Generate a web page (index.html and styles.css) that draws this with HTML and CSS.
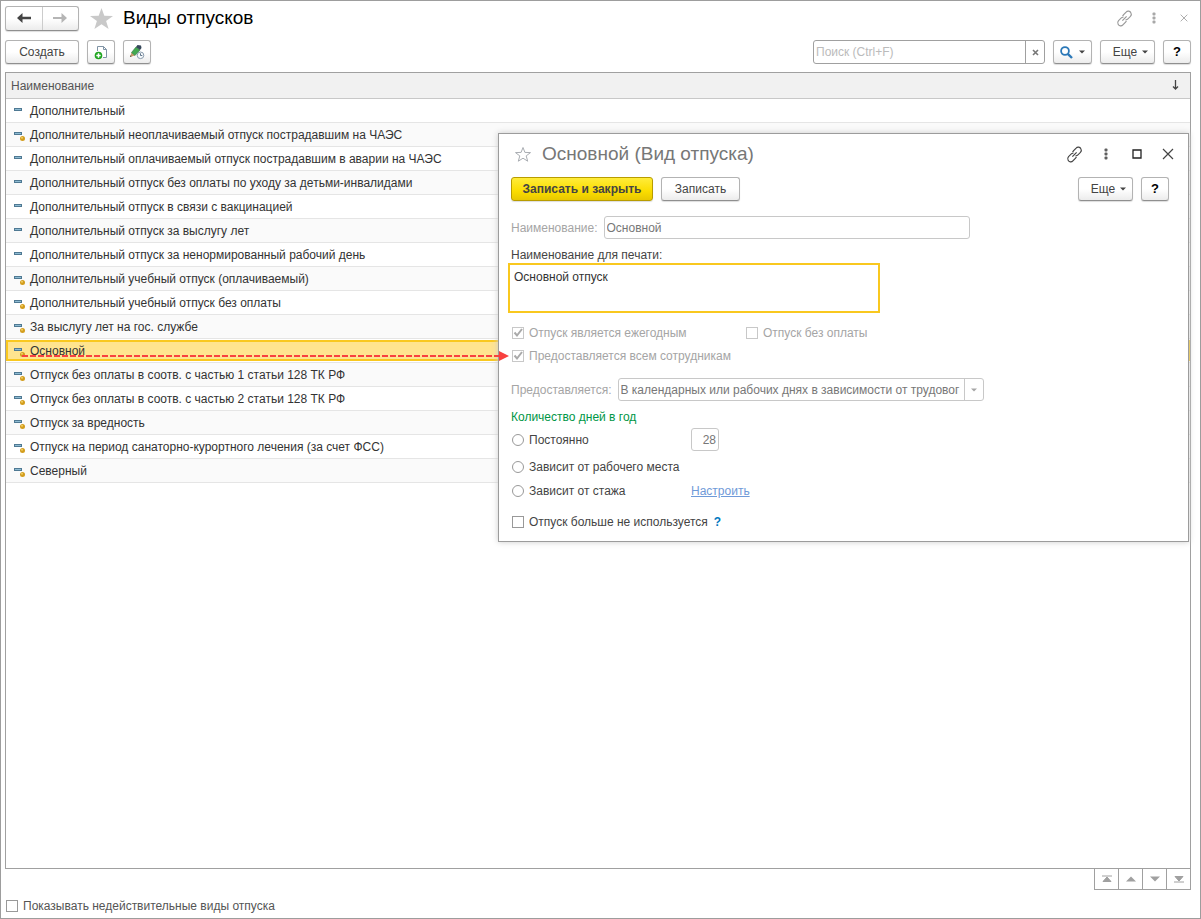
FILE: index.html
```html
<!DOCTYPE html>
<html lang="ru">
<head>
<meta charset="utf-8">
<title>Виды отпусков</title>
<link rel="stylesheet" href="styles.css">
</head>
<body>
<svg class="sprite" aria-hidden="true">
  <symbol id="link" viewBox="0 0 16 16"><g fill="none" stroke="currentColor" stroke-width="1.1"><path d="M6.200 5.800 7 4.600 9.500 2A2.700 2.700 0 0 1 14 2.600 2.900 2.900 0 0 1 13.600 6L10.800 8.800 9 9.400"/><path d="M9.800 10.200 9 11.400 6.500 14A2.700 2.700 0 0 1 2 13.400 2.900 2.900 0 0 1 2.400 10L5.200 7.200 7 6.600"/><path d="M6 10 10 6"/></g></symbol>
  <symbol id="dots" viewBox="0 0 4 12"><g fill="currentColor" opacity=".85"><rect x="0.5" y="0.5" width="3" height="3" rx="1"/><rect x="0.5" y="4.5" width="3" height="3" rx="1"/><rect x="0.5" y="8.5" width="3" height="3" rx="1"/></g></symbol>
  <symbol id="cross" viewBox="0 0 12 12"><path d="M1 1 11 11M11 1 1 11" fill="none" stroke="currentColor" stroke-width="1.2"/></symbol>
  <symbol id="caret" viewBox="0 0 6 4"><path d="M0 0.5H6L3 3.5Z" fill="currentColor"/></symbol>
  <symbol id="item" viewBox="0 0 12 12"><rect x="0" y="2" width="8" height="3" fill="#4f7993"/><rect x="1" y="3" width="6" height="1" fill="#8fbcd3"/></symbol>
  <symbol id="item-dot" viewBox="0 0 12 12"><rect x="0" y="2" width="8" height="3" fill="#4f7993"/><rect x="1" y="3" width="6" height="1" fill="#8fbcd3"/><circle cx="8.5" cy="8.500" r="2.500" fill="#d39d1c"/><circle cx="8" cy="7.800" r="1" fill="#f0cf68"/></symbol>
</svg>
<main class="window">
  <header class="titlebar">
    <div class="nav">
      <button type="button" aria-label="Назад"><svg width="14" height="10" viewBox="0 0 14 10"><path d="M5.500 0 0 5l5.500 5V6.200H14V3.800H5.500Z" fill="#444"/></svg></button>
      <button type="button" aria-label="Вперед"><svg width="14" height="10" viewBox="0 0 14 10"><path d="M8.500 0 14 5l-5.500 5V6H0V4H8.500Z" fill="#b5b5b5"/></svg></button>
    </div>
    <svg class="star" width="23" height="21" viewBox="0 0 23 21"><path d="M11.500 0 14.300 7.700 23 8 16.100 13 18.600 21 11.500 16.300 4.400 21 6.900 13 0 8 8.700 7.700Z" fill="#c9c9c9"/></svg>
    <h1>Виды отпусков</h1>
    <div class="tools">
      <button type="button" class="icon" aria-label="Ссылка"><svg width="17" height="17"><use href="#link"/></svg></button>
      <button type="button" class="icon" aria-label="Меню"><svg width="4" height="12"><use href="#dots"/></svg></button>
      <button type="button" class="icon" aria-label="Закрыть"><svg width="8" height="8"><use href="#cross"/></svg></button>
    </div>
  </header>

  <div class="toolbar">
    <button type="button" class="btn create">Создать</button>
    <button type="button" class="btn square" aria-label="Скопировать"><svg width="16" height="16" viewBox="0 0 16 16"><path d="M4.500 7V2.500H10.500L13.500 5.500V13.500H10M10.500 2.500V5.500H13.500" fill="#fff" stroke="#7f93a5"/><circle cx="5.500" cy="11.500" r="3.800" fill="#1fa51f"/><path d="M5.500 9.300V13.700M3.300 11.500H7.700" stroke="#fff" stroke-width="1.500"/></svg></button>
    <button type="button" class="btn square" aria-label="Изменить"><svg width="16" height="16" viewBox="0 0 16 16"><path d="M1 13 2.500 8.500 6 11.500Z" fill="#c99b6a"/><path d="M2.500 8.500 7 3 11 6 6 11.500Z" fill="#43a951" stroke="#2d7540" stroke-width=".6"/><path d="M7 3 8.500 1 12 1.500 12.500 4 11 6Z" fill="#35475a"/><path d="m1 13 .6-1.800 1 1Z" fill="#333"/><circle cx="11.500" cy="11.300" r="3.300" fill="#f7fafc" stroke="#899bac"/><path d="M11.500 9.300V11.500H13.300" fill="none" stroke="#60758a"/></svg></button>
    <div class="search">
      <input type="search" placeholder="Поиск (Ctrl+F)" aria-label="Поиск">
      <button type="button" aria-label="Очистить"><svg width="7" height="7" viewBox="0 0 7 7"><path d="M1 1 6 6M6 1 1 6" stroke="#777" stroke-width="1.600"/></svg></button>
    </div>
    <button type="button" class="btn find" aria-label="Найти"><svg width="13" height="13" viewBox="0 0 13 13"><circle cx="5" cy="5" r="3.900" fill="none" stroke="#2b78b8" stroke-width="1.800"/><path d="M7.800 7.800 12 12" stroke="#2b78b8" stroke-width="2.400"/></svg><svg width="6" height="4"><use href="#caret"/></svg></button>
    <button type="button" class="btn more">Еще<svg width="6" height="4"><use href="#caret"/></svg></button>
    <button type="button" class="btn square help">?</button>
  </div>

  <section class="list">
    <table>
      <thead><tr><th scope="col"><div class="head">Наименование<svg width="7" height="10" viewBox="0 0 7 10"><path d="M3.500 0V9M1 6.500 3.500 9 6 6.500" fill="none" stroke="#444" stroke-width="1.300"/></svg></div></th></tr></thead>
      <tbody>
        <tr><td><svg><use href="#item"/></svg>Дополнительный</td></tr>
        <tr><td><svg><use href="#item-dot"/></svg>Дополнительный неоплачиваемый отпуск пострадавшим на ЧАЭС</td></tr>
        <tr><td><svg><use href="#item"/></svg>Дополнительный оплачиваемый отпуск пострадавшим в аварии на ЧАЭС</td></tr>
        <tr><td><svg><use href="#item"/></svg>Дополнительный отпуск без оплаты по уходу за детьми-инвалидами</td></tr>
        <tr><td><svg><use href="#item"/></svg>Дополнительный отпуск в связи с вакцинацией</td></tr>
        <tr><td><svg><use href="#item"/></svg>Дополнительный отпуск за выслугу лет</td></tr>
        <tr><td><svg><use href="#item"/></svg>Дополнительный отпуск за ненормированный рабочий день</td></tr>
        <tr><td><svg><use href="#item-dot"/></svg>Дополнительный учебный отпуск (оплачиваемый)</td></tr>
        <tr><td><svg><use href="#item-dot"/></svg>Дополнительный учебный отпуск без оплаты</td></tr>
        <tr><td><svg><use href="#item-dot"/></svg>За выслугу лет на гос. службе</td></tr>
        <tr class="selected"><td><svg><use href="#item-dot"/></svg>Основной</td></tr>
        <tr><td><svg><use href="#item-dot"/></svg>Отпуск без оплаты в соотв. с частью 1 статьи 128 ТК РФ</td></tr>
        <tr><td><svg><use href="#item-dot"/></svg>Отпуск без оплаты в соотв. с частью 2 статьи 128 ТК РФ</td></tr>
        <tr><td><svg><use href="#item-dot"/></svg>Отпуск за вредность</td></tr>
        <tr><td><svg><use href="#item-dot"/></svg>Отпуск на период санаторно-курортного лечения (за счет ФСС)</td></tr>
        <tr><td><svg><use href="#item-dot"/></svg>Северный</td></tr>
      </tbody>
    </table>
  </section>
  <div class="pager">
    <button type="button" aria-label="В начало"><svg width="10" height="8" viewBox="0 0 10 8"><path d="M0 1H10M1 6.500 5 2 9 6.500Z" fill="#a0a0a0" stroke="#a0a0a0"/></svg></button>
    <button type="button" aria-label="Вверх"><svg width="10" height="8" viewBox="0 0 10 8"><path d="M0 6.500 5 1.500 10 6.500Z" fill="#a0a0a0"/></svg></button>
    <button type="button" aria-label="Вниз"><svg width="10" height="8" viewBox="0 0 10 8"><path d="M0 1.500 5 6.500 10 1.500Z" fill="#a0a0a0"/></svg></button>
    <button type="button" aria-label="В конец"><svg width="10" height="8" viewBox="0 0 10 8"><path d="M0 7H10M1 1.500 5 6 9 1.500Z" fill="#a0a0a0" stroke="#a0a0a0"/></svg></button>
  </div>
  <label class="check inactive"><input type="checkbox">Показывать недействительные виды отпуска</label>

  <section class="dialog" role="dialog" aria-labelledby="dialog-title">
    <header class="dialog-title">
      <svg width="18" height="17" viewBox="0 0 18 17"><path d="M9 1.500 10.900 6.400 16.500 6.600 12.200 9.900 13.700 15.200 9 12.200 4.300 15.200 5.800 9.900 1.500 6.600 7.100 6.400Z" fill="none" stroke="#a9adb2"/></svg>
      <h2 id="dialog-title">Основной (Вид отпуска)</h2>
      <div class="tools">
        <button type="button" class="icon" aria-label="Ссылка"><svg width="17" height="17"><use href="#link"/></svg></button>
        <button type="button" class="icon" aria-label="Меню"><svg width="4" height="12"><use href="#dots"/></svg></button>
        <button type="button" class="icon" aria-label="Развернуть"><svg width="10" height="10" viewBox="0 0 10 10"><path d="M1 1H9V9H1Z" fill="none" stroke="#222" stroke-width="1.300"/></svg></button>
        <button type="button" class="icon" aria-label="Закрыть"><svg width="12" height="12"><use href="#cross"/></svg></button>
      </div>
    </header>
    <div class="dialog-bar">
      <button type="button" class="btn primary">Записать и закрыть</button>
      <button type="button" class="btn save">Записать</button>
      <button type="button" class="btn more">Еще<svg width="6" height="4"><use href="#caret"/></svg></button>
      <button type="button" class="btn square help">?</button>
    </div>
    <form class="form">
      <div class="field"><label for="name">Наименование:</label><input id="name" type="text" value="Основной" disabled></div>
      <label class="caption" for="print-name">Наименование для печати:</label>
      <textarea id="print-name">Основной отпуск</textarea>
      <div class="pair">
        <label class="check"><input type="checkbox" checked disabled>Отпуск является ежегодным</label>
        <label class="check"><input type="checkbox" disabled>Отпуск без оплаты</label>
      </div>
      <label class="check everyone"><input type="checkbox" checked disabled>Предоставляется всем сотрудникам</label>
      <div class="field provided"><label for="kind">Предоставляется:</label><div class="combo"><select id="kind" disabled><option>В календарных или рабочих днях в зависимости от трудовог</option></select><span><svg width="6" height="4"><use href="#caret"/></svg></span></div></div>
      <fieldset>
        <legend>Количество дней в год</legend>
        <div class="option tall"><label class="check"><input type="radio" name="days">Постоянно</label><input class="days" type="text" value="28" aria-label="Количество дней" disabled></div>
        <div class="option"><label class="check"><input type="radio" name="days">Зависит от рабочего места</label></div>
        <div class="option"><label class="check"><input type="radio" name="days">Зависит от стажа</label><a href="#">Настроить</a></div>
      </fieldset>
      <div class="unused"><label class="check"><input type="checkbox">Отпуск больше не используется</label><a class="hint" href="#">?</a></div>
    </form>
  </section>
  <svg class="arrow" width="487" height="10" viewBox="0 0 487 10" aria-hidden="true"><path d="M0 5H478" stroke="#f8413f" stroke-width="2" stroke-dasharray="6 2"/><path d="M477 0 487 5 477 10Z" fill="#f8413f"/></svg>
</main>
</body>
</html>
```
FILE: styles.css
```css
* { box-sizing: border-box; }
body { margin: 0; background: #fff; color: #333; font: 12px/16px "Liberation Sans", Arial, sans-serif; }
button, input, select, textarea { font: inherit; color: inherit; margin: 0; }
button { padding: 0; }
svg { flex: none; }
h1, h2 { margin: 0; font-weight: normal; }
a { color: #6f9ad8; }
.sprite { position: absolute; width: 0; height: 0; }

.window { position: relative; display: flex; flex-direction: column; min-height: 100vh; border: 1px solid #9d9d9d; padding: 4px 9px 4px 4px; }
.titlebar { display: flex; align-items: center; height: 26px; }
.nav { display: flex; width: 74px; height: 25px; border: 1px solid #b3b3b3; border-bottom-color: #8f8f8f; border-radius: 3px; background: linear-gradient(#fff 50%, #ececec); box-shadow: 0 1px 1px #ddd; }
.nav button { flex: 1; display: flex; align-items: center; justify-content: center; border: 0; background: none; }
.nav button + button { border-left: 1px solid #ccc; }
.star { margin: 0 10px 0 11px; }
h1 { font-size: 19px; line-height: 24px; color: #000; }
.tools { display: flex; align-items: center; margin-left: auto; }
.icon { display: flex; align-items: center; justify-content: center; border: 0; background: none; width: 30px; height: 20px; color: #444; }
.titlebar .icon { color: #999; }
.titlebar .tools { margin-right: -8px; }

.btn { display: flex; align-items: center; justify-content: center; height: 24px; border: 1px solid #b3b3b3; border-bottom-color: #8f8f8f; border-radius: 3px; background: linear-gradient(#fff 50%, #ececec); box-shadow: 0 1px 1px #ddd; color: #444; }
.toolbar { display: flex; gap: 8px; margin-top: 9px; }
.create { width: 74px; }
.square { width: 28px; }
.find { width: 39px; gap: 6px; }
.more { width: 55px; gap: 5px; padding-left: 6px; }
.help { font-weight: bold; font-size: 13px; color: #000; }
.search { display: flex; width: 232px; height: 24px; margin-left: auto; border: 1px solid #a0a0a0; border-radius: 3px; }
.search input { flex: 1; min-width: 0; border: 0; padding: 0 2px; background: none; appearance: none; }
.search input::placeholder { color: #bbb; }
.search button { width: 19px; border: 0; border-left: 1px solid #a0a0a0; background: none; }

.list { flex: 1; margin-top: 8px; border: 1px solid #a0a0a0; }
table { width: 100%; border-collapse: separate; border-spacing: 0; }
th { height: 26px; padding: 0; border-bottom: 1px solid #c8c8c8; background: #f1f1f1; font-weight: normal; text-align: left; color: #555; }
.head { display: flex; justify-content: space-between; padding: 0 11px 0 5px; }
.head svg { margin-top: 2px; }
td { height: 24px; padding: 0 0 0 8px; border-bottom: 1px solid #e5e5e5; white-space: nowrap; }
td svg { width: 12px; height: 12px; margin-right: 4px; vertical-align: -3px; }
tbody tr:nth-child(even) { background: #fafafa; }
.selected td { background: #ffe48f; box-shadow: inset 0 1px #fff, inset 0 -1px #fff, inset 0 3px #f9c81f, inset 0 -3px #f9c81f, inset 2px 0 #f9c81f, inset -2px 0 #f9c81f; }

.pager { display: flex; align-self: flex-end; border: 1px solid #a0a0a0; border-width: 0 1px 1px 0; }
.pager button { width: 24px; height: 20px; border: 0; border-left: 1px solid #a0a0a0; background: none; display: flex; align-items: center; justify-content: center; }

.check { display: flex; align-items: center; gap: 5px; height: 16px; padding-left: 1px; }
.check input { appearance: none; width: 12px; height: 12px; border: 1px solid #999; background: #fff; }
.check input[type="radio"] { border-radius: 50%; }
.check input:disabled { border-color: #c8c8c8; }
.check input:checked { background: url("data:image/svg+xml,%3Csvg xmlns='http://www.w3.org/2000/svg' viewBox='0 0 10 10'%3E%3Cpath d='M1.500 4.500 4 7.500 9 1' fill='none' stroke='%23aaa' stroke-width='2'/%3E%3C/svg%3E") center / 10px no-repeat; }
.check:has(input:disabled) { color: #a5a5a5; }
.inactive { align-self: flex-start; margin-top: 8px; color: #555; }

.dialog { position: absolute; top: 132px; right: 11px; width: 691px; padding: 0 12px 11px; border: 1px solid #9c9c9c; background: #fff; box-shadow: 0 0 6px #ccc; }
.dialog-title { display: flex; align-items: center; height: 40px; gap: 10px; padding-left: 3px; }
h2 { font-size: 19px; line-height: 24px; color: #777; }
.dialog-title .tools { margin-right: -7px; }
.dialog-title .icon { width: 31px; }
.dialog-bar { display: flex; gap: 8px; margin: 3px 7px 0 0; }
.primary { width: 142px; border-color: #b89c00; background: linear-gradient(#ffec3a, #fbdd00 60%, #e8c800); font-weight: bold; }
.save { width: 79px; margin-right: auto; }
.form { display: flex; flex-direction: column; margin-top: 15px; }
.field { display: flex; align-items: center; gap: 6px; color: #a5a5a5; }
.field input, .days { height: 23px; border: 1px solid #c8c8c8; border-radius: 3px; padding: 0 2px; background: #fff; color: #777; }
.field input { width: 366px; }
.caption { margin-top: 8px; color: #444; }
textarea { display: block; width: 372px; height: 50px; margin-left: -3px; padding: 4px; border: 2px solid #f9c81f; outline: 0; resize: none; }
.pair { display: flex; margin: 12px 0 7px; }
.pair .check:first-child { width: 234px; }
.provided { margin-top: 14px; }
.combo { position: relative; width: 366px; }
.combo select { display: block; width: 100%; height: 23px; appearance: none; border: 1px solid #c8c8c8; border-radius: 3px; padding: 0 20px 0 2px; background: #fff; color: #777; opacity: 1; }
.combo span { position: absolute; top: 0; right: 0; bottom: 0; width: 20px; border-left: 1px solid #c8c8c8; display: flex; align-items: center; justify-content: center; pointer-events: none; }
fieldset { margin: 8px 0 0; padding: 0; border: 0; }
legend { padding: 0; color: #009646; margin-bottom: 3px; }
.option { display: flex; align-items: center; margin-bottom: 8px; color: #444; }
.option .check { min-width: 180px; }
.tall { height: 23px; }
.days { width: 28px; text-align: right; }
.unused { display: flex; gap: 6px; margin-top: 7px; color: #444; }
.hint { color: #0078c0; font-weight: bold; text-decoration: none; }
.arrow { position: absolute; left: 21px; top: 350px; }
```
